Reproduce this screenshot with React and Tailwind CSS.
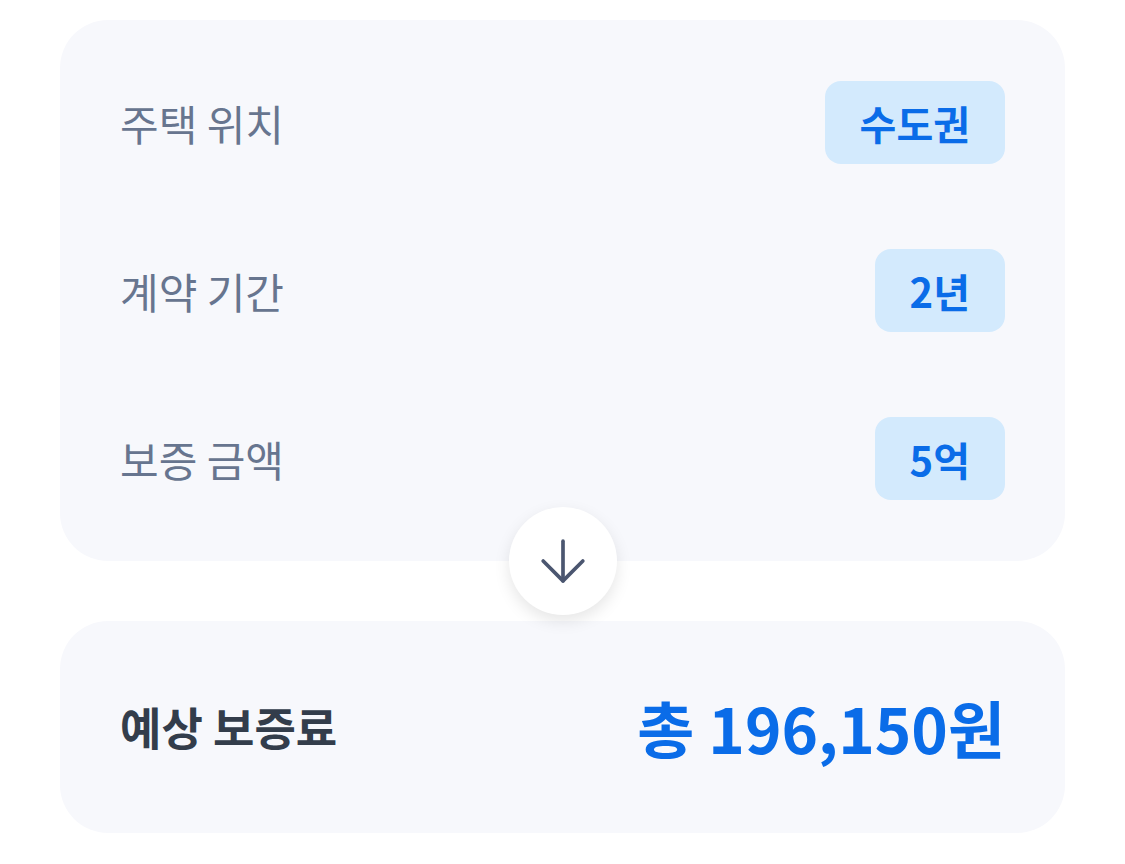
import { ArrowDown } from "lucide-react";

const rows = [
  { label: "주택 위치", value: "수도권" },
  { label: "계약 기간", value: "2년" },
  { label: "보증 금액", value: "5억" },
];

export default function App() {
  return (
    <div
      className="w-[1125px] h-[864px] bg-white pt-[20px] px-[60px]"
      style={{ fontFamily: '"Noto Sans CJK KR", "Noto Sans", sans-serif' }}
    >
      {/* 입력 카드 */}
      <div className="relative bg-[#f7f8fc] rounded-[48px] h-[541px] px-[60px] pt-[61px]">
        <div className="flex flex-col gap-[85px]">
          {rows.map((row) => (
            <div key={row.label} className="flex items-center justify-between h-[83px]">
              <span className="text-[42px] text-[#67758f]">{row.label}</span>
              <span className="h-[83px] px-[35px] rounded-[16px] bg-[#d3eafd] text-[#0a6ce8] text-[40px] font-bold flex items-center">
                {row.value}
              </span>
            </div>
          ))}
        </div>

        {/* 화살표 */}
        <div className="absolute left-1/2 -translate-x-1/2 bottom-[-54px] w-[108px] h-[108px] rounded-full bg-white shadow-[0_6px_16px_rgba(0,0,0,0.1)] flex items-center justify-center">
          <ArrowDown size={68} strokeWidth={1.3} color="#4b5670" />
        </div>
      </div>

      {/* 결과 카드 */}
      <div className="mt-[60px] bg-[#f7f8fc] rounded-[48px] h-[212px] px-[60px] flex items-center justify-between">
        <span className="text-[45px] font-bold text-[#333d4b]">예상 보증료</span>
        <span className="text-[62px] font-bold text-[#0a6ce8]">총 196,150원</span>
      </div>
    </div>
  );
}
